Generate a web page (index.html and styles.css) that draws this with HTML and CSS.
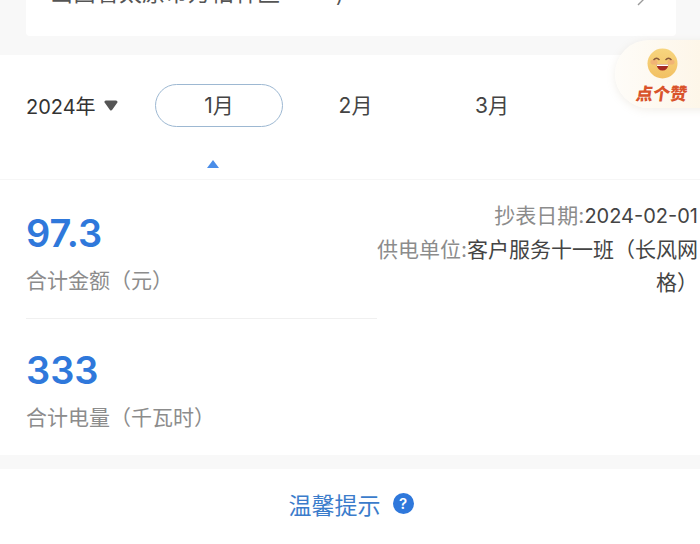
FILE: index.html
```html
<!DOCTYPE html>
<html lang="zh">
<head>
<meta charset="utf-8">
<title>账单</title>
<link rel="stylesheet" href="styles.css">
</head>
<body>
<div class="phone">
  <section class="top-band">
    <div class="top-card">
      <span class="top-text">山西省太原市万柏林区</span>
      <span class="top-paren">)</span>
      <svg class="top-chevron" width="12" height="20" viewBox="0 0 12 20"><path d="M2 1 L10 9 L2 17" fill="none" stroke="#9a9a9a" stroke-width="1.4"/></svg>
    </div>
  </section>
  <section class="bill">
    <div class="tabs">
      <div class="year">2024年<svg class="caret" width="14" height="11" viewBox="0 0 14 11"><path d="M2 2 H12 L7 9Z" fill="#555" stroke="#555" stroke-width="3" stroke-linejoin="round"/></svg></div>
      <div class="month month-active">1月</div>
      <div class="month">2月</div>
      <div class="month">3月</div>
    </div>
    <div class="pointer-row"><span class="pointer"></span></div>
    <div class="details">
      <div class="totals">
        <div class="total total-first">
          <div class="amount">97.3</div>
          <div class="label">合计金额（元）</div>
        </div>
        <div class="total total-second">
          <div class="amount">333</div>
          <div class="label">合计电量（千瓦时）</div>
        </div>
      </div>
      <div class="meta">
        <div><span class="meta-key">抄表日期:</span><span class="meta-date">2024-02-01</span></div>
        <div><span class="meta-key">供电单位:</span>客户服务十一班（长风网格）</div>
      </div>
    </div>
  </section>
  <div class="gap"></div>
  <section class="tips">温馨提示<span class="help">?</span></section>
  <div class="like">
    <svg class="face" width="31" height="31" viewBox="0 0 31 31">
      <defs><linearGradient id="fg" x1="0" y1="0" x2="0" y2="1"><stop offset="0" stop-color="#f7d57e"/><stop offset="1" stop-color="#f2c063"/></linearGradient></defs>
      <circle cx="15.5" cy="15.5" r="15" fill="url(#fg)"/>
      <ellipse cx="7" cy="14" rx="3.6" ry="2.6" fill="#f0a878" opacity=".7"/>
      <ellipse cx="24" cy="14" rx="3.6" ry="2.6" fill="#f0a878" opacity=".7"/>
      <path d="M6.5 12 Q9.5 8.500 12.500 12 M18.500 12 Q21.500 8.500 24.500 12" fill="none" stroke="#8a5a3a" stroke-width="1.300"/>
      <path d="M9.500 16.500 H21.500 Q20.500 22.500 15.500 22.500 Q10.500 22.500 9.500 16.500Z" fill="#a52a22"/>
      <path d="M9.500 16.500 H21.500 L21 18 H10Z" fill="#fff"/>
    </svg>
    <div class="like-text">点个赞</div>
  </div>
</div>
</body>
</html>
```

FILE: styles.css
```css
* { box-sizing: border-box; margin: 0; padding: 0; }
html, body { width: 700px; height: 544px; overflow: hidden; background: #fff; }
body { font-family: "Inter", "Noto Sans CJK SC", sans-serif; }
.phone { position: relative; width: 700px; height: 544px; overflow: hidden; }
.top-band { height: 55px; background: #f8f8f8; padding: 0 24px 0 26px; }
.top-card { height: 36px; background: #fff; border-radius: 0 0 4px 4px; display: flex; padding: 0 24px; position: relative; overflow: hidden; }
.top-text { font-size: 23px; line-height: 24px; margin-top: -19px; color: #555; white-space: nowrap; }
.top-paren { font-size: 20px; line-height: 20px; margin: -15px 0 0 56px; color: #555; }
.top-chevron { position: absolute; right: 28px; top: -12px; }
.bill { height: 400px; background: #fff; }
.tabs { height: 100px; display: flex; align-items: center; padding-left: 26px; }
.year { width: 129px; font-size: 20px; color: #333; display: flex; align-items: center; }
.caret { margin-left: 8px; }
.month { width: 128px; height: 43px; margin-right: 8.5px; padding-bottom: 3px; display: flex; align-items: center; justify-content: center; font-size: 21px; color: #444; }
.month-active { border: 1px solid #9db8d2; border-radius: 22px; background: #fff; }
.pointer-row { height: 25px; padding: 5px 0 0 207px; border-bottom: 1px solid #f6f6f6; }
.pointer { display: block; width: 12px; height: 8px; background: #4a8de8; clip-path: polygon(50% 0, 100% 100%, 0 100%); }
.details { display: flex; }
.totals { width: 377px; padding-left: 26px; flex-shrink: 0; }
.total-first { height: 139px; padding-top: 29px; border-bottom: 1px solid #f0f0f0; }
.total-second { padding-top: 27px; }
.amount { font-size: 38px; line-height: 48px; font-weight: 600; color: #2f78db; }
.label { margin-top: 9px; font-size: 21px; line-height: 30px; color: #8c8c8c; }
.meta { flex: 1; margin-left: -6px; padding: 19px 2px 0 0; text-align: right; font-size: 21px; line-height: 33px; color: #444; }
.meta-key { color: #8c8c8c; }
.meta-date { font-size: 20px; }
.gap { height: 14px; background: #f8f8f8; }
.tips { height: 75px; background: #fff; display: flex; align-items: center; justify-content: center; font-size: 23px; color: #3b7ccb; padding: 0 0 6px 2px; }
.help { width: 21px; height: 21px; margin-left: 12px; border-radius: 50%; background: #2f78db; color: #fff; font-size: 15px; font-weight: 600; display: flex; align-items: center; justify-content: center; }
.like { position: absolute; left: 615px; top: 40px; width: 100px; height: 68px; padding: 8px 0 0 32px; border-radius: 34px 0 0 34px; background: linear-gradient(90deg, #fefcf8, #fdf5e6); box-shadow: 0 2px 8px rgba(180,160,130,.18); }
.like-text { width: 52px; margin: 1px 0 0 -11px; font-size: 17px; line-height: 20px; font-weight: 900; color: #d9532b; white-space: nowrap; transform: skewX(-8deg); }
```
